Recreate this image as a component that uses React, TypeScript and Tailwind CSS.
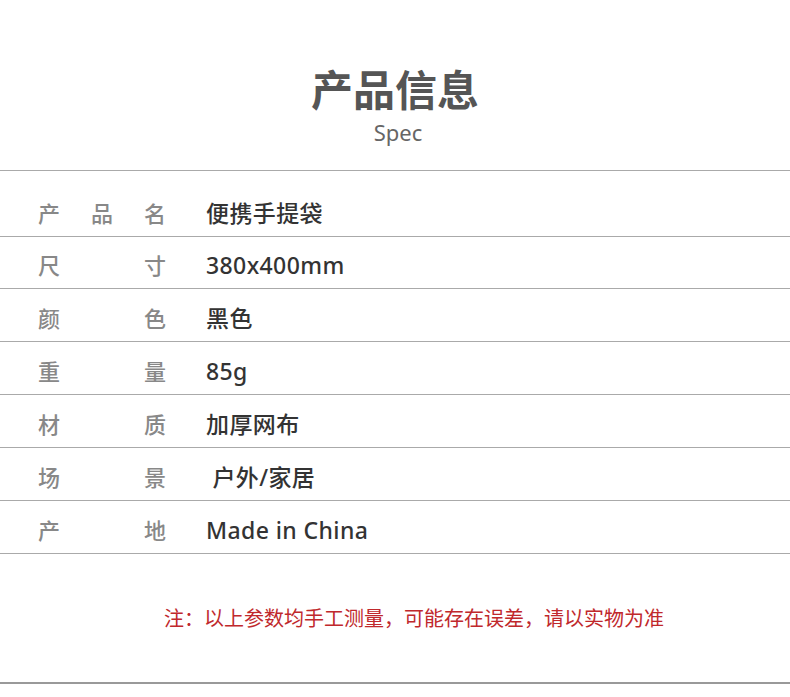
import React from "react";

const rows: { label: string[]; value: string }[] = [
  { label: ["产", "品", "名"], value: "便携手提袋" },
  { label: ["尺", "寸"], value: "380x400mm" },
  { label: ["颜", "色"], value: "黑色" },
  { label: ["重", "量"], value: "85g" },
  { label: ["材", "质"], value: "加厚网布" },
  { label: ["场", "景"], value: "\u00a0户外/家居" },
  { label: ["产", "地"], value: "Made in China" },
];

const heights = ["h-[66px]", "h-[52px]", "h-[53px]", "h-[53px]", "h-[53px]", "h-[53px]", "h-[53px]"];

export default function App() {
  return (
    <div
      className="w-[790px] h-[697px] bg-white flex flex-col"
      style={{ fontFamily: '"Noto Sans", "Noto Sans CJK SC", sans-serif' }}
    >
      <div className="flex flex-col items-center pt-[62px]">
        <div className="text-[42px] leading-[56px] font-bold text-[#555555]">产品信息</div>
        <div className="text-[22px] leading-[30px] text-[#666666] -mt-[1px] pl-[6px]">Spec</div>
      </div>
      <div className="mt-[23px] border-t border-[#aaaaaa]">
        {rows.map((r, i) => (
          <div
            key={i}
            className={`flex items-end border-b border-[#aaaaaa] pb-[8px] ${heights[i]}`}
          >
            <div className="w-[128px] ml-[38px] flex justify-between text-[22px] leading-[30px] font-medium text-[#888888]">
              {r.label.map((c, j) => (
                <span key={j}>{c}</span>
              ))}
            </div>
            <div className="ml-[40px] text-[23px] leading-[30px] font-medium tracking-[0.4px] text-[#333333]">{r.value}</div>
          </div>
        ))}
      </div>
      <div className="flex justify-center pl-[38px] mt-[51px] text-[20px] leading-[28px] text-[#c0282c]">
        注：以上参数均手工测量，可能存在误差，请以实物为准
      </div>
      <div className="mt-[49px] h-[2px] bg-[#999999]" />
    </div>
  );
}
